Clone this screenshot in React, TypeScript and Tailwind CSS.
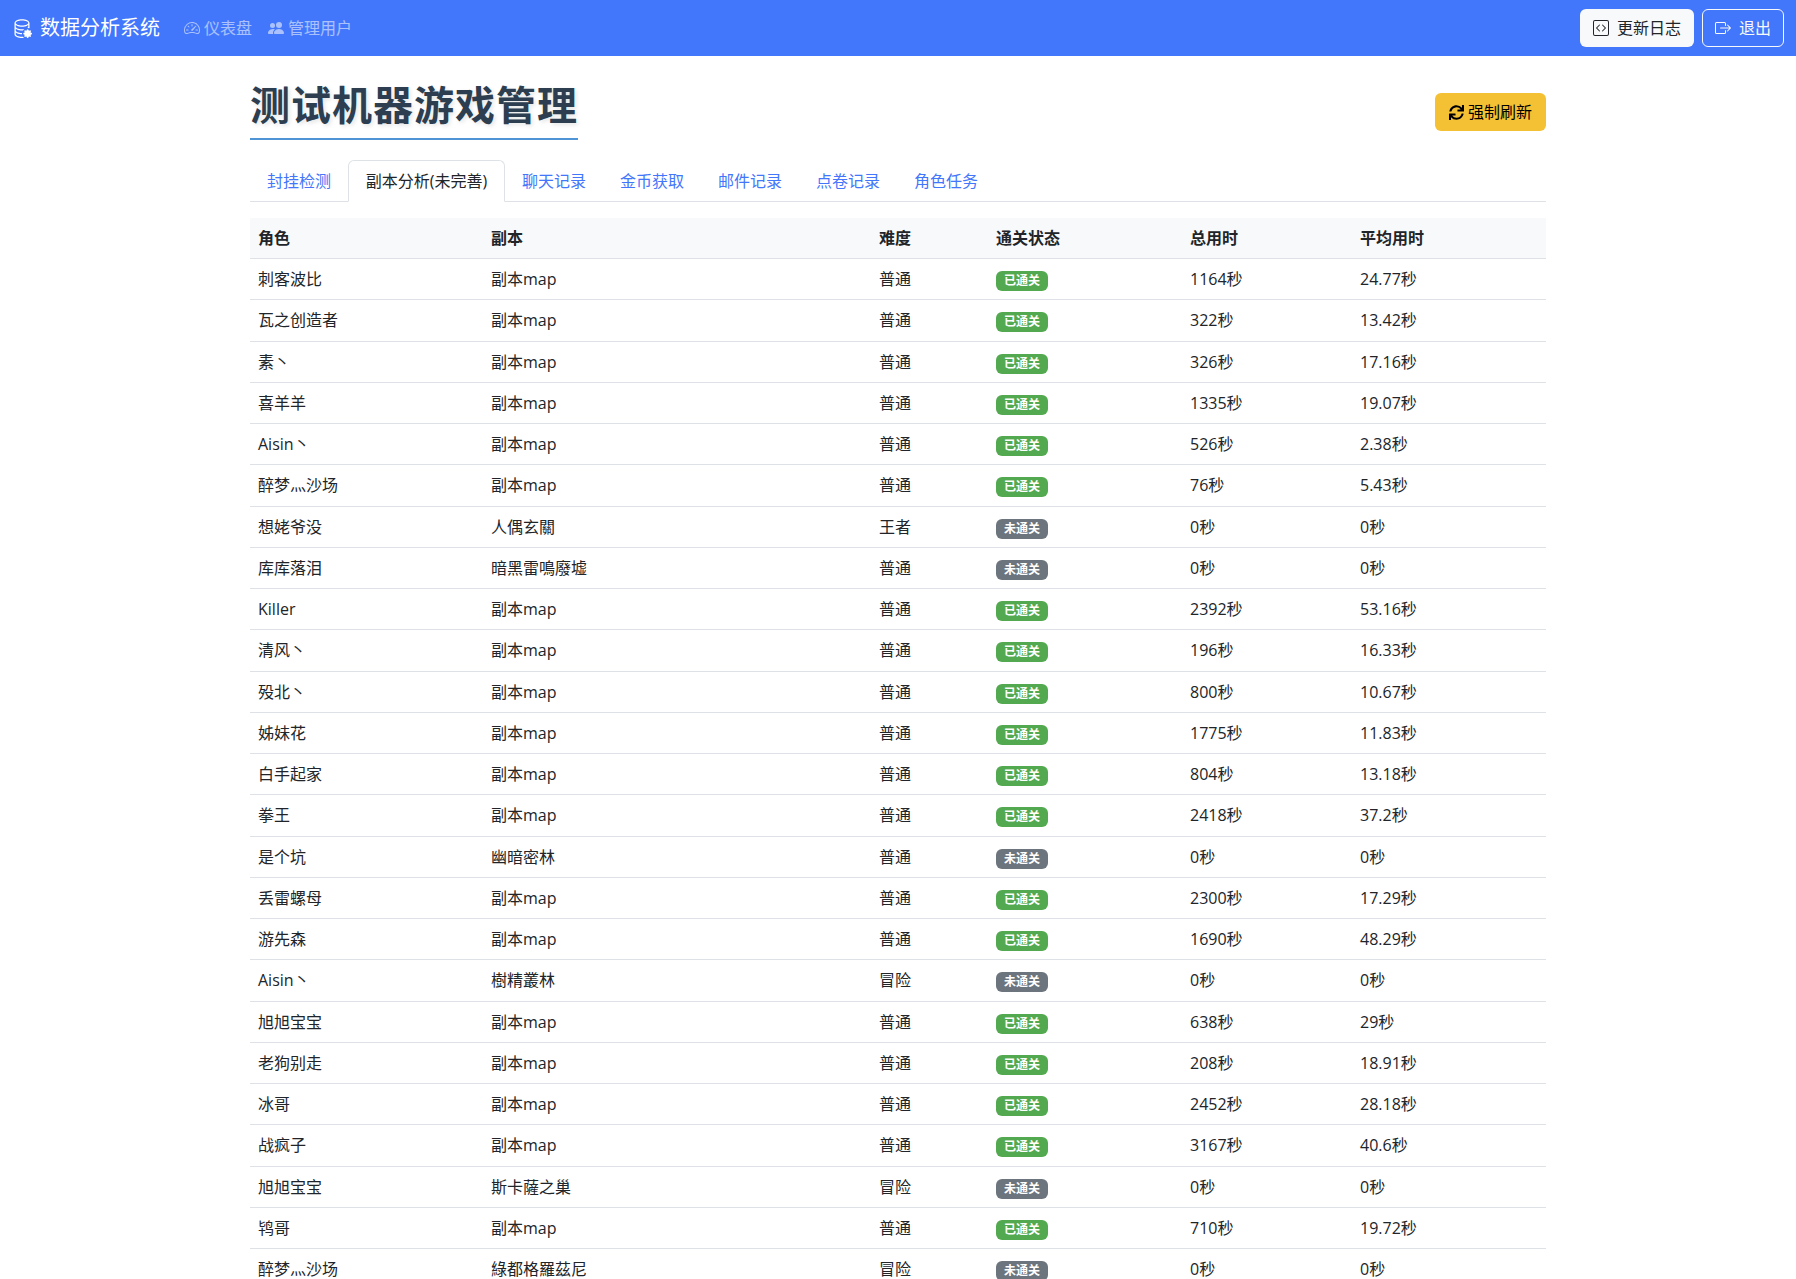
import { BsDatabaseGear, BsSpeedometer2, BsPeopleFill, BsCodeSquare, BsBoxArrowRight } from 'react-icons/bs';
import { FaSync } from 'react-icons/fa';

const FONT = "font-['Open_Sans','Noto_Sans_CJK_SC',sans-serif]";

const tabs = ['封挂检测', '副本分析(未完善)', '聊天记录', '金币获取', '邮件记录', '点卷记录', '角色任务'];

// role, dungeon, difficulty, cleared, total, average
const rows: [string, string, string, boolean, string, string][] = [
  ['刺客波比', '副本map', '普通', true, '1164秒', '24.77秒'],
  ['瓦之创造者', '副本map', '普通', true, '322秒', '13.42秒'],
  ['素丶', '副本map', '普通', true, '326秒', '17.16秒'],
  ['喜羊羊', '副本map', '普通', true, '1335秒', '19.07秒'],
  ['Aisin丶', '副本map', '普通', true, '526秒', '2.38秒'],
  ['醉梦灬沙场', '副本map', '普通', true, '76秒', '5.43秒'],
  ['想姥爷没', '人偶玄關', '王者', false, '0秒', '0秒'],
  ['库库落泪', '暗黑雷鳴廢墟', '普通', false, '0秒', '0秒'],
  ['Killer', '副本map', '普通', true, '2392秒', '53.16秒'],
  ['清风丶', '副本map', '普通', true, '196秒', '16.33秒'],
  ['殁北丶', '副本map', '普通', true, '800秒', '10.67秒'],
  ['姊妹花', '副本map', '普通', true, '1775秒', '11.83秒'],
  ['白手起家', '副本map', '普通', true, '804秒', '13.18秒'],
  ['拳王', '副本map', '普通', true, '2418秒', '37.2秒'],
  ['是个坑', '幽暗密林', '普通', false, '0秒', '0秒'],
  ['丢雷螺母', '副本map', '普通', true, '2300秒', '17.29秒'],
  ['游先森', '副本map', '普通', true, '1690秒', '48.29秒'],
  ['Aisin丶', '樹精叢林', '冒险', false, '0秒', '0秒'],
  ['旭旭宝宝', '副本map', '普通', true, '638秒', '29秒'],
  ['老狗别走', '副本map', '普通', true, '208秒', '18.91秒'],
  ['冰哥', '副本map', '普通', true, '2452秒', '28.18秒'],
  ['战疯子', '副本map', '普通', true, '3167秒', '40.6秒'],
  ['旭旭宝宝', '斯卡薩之巢', '冒险', false, '0秒', '0秒'],
  ['鸨哥', '副本map', '普通', true, '710秒', '19.72秒'],
  ['醉梦灬沙场', '綠都格羅茲尼', '冒险', false, '0秒', '0秒'],
];

export default function App() {
  return (
    <div className={`h-[1279px] overflow-hidden bg-white text-[16px] leading-6 text-[#212529] ${FONT}`}>
      {/* Navbar */}
      <nav className="h-14 bg-[#4276fb] flex items-center justify-between pl-3 pr-3">
        <div className="flex items-center">
          <a className="flex items-center text-white text-[20px] leading-[30px] mr-4">
            <BsDatabaseGear className="w-5 h-5 mr-2" />
            数据分析系统
          </a>
          <a className="flex items-center text-white/55 px-2">
            <BsSpeedometer2 className="w-4 h-4 mr-1" />
            仪表盘
          </a>
          <a className="flex items-center text-white/55 px-2">
            <BsPeopleFill className="w-4 h-4 mr-1" />
            管理用户
          </a>
        </div>
        <div className="flex items-center gap-2">
          <button className="h-[38px] w-[114px] flex items-center justify-center bg-[#f8f9fa] text-[#212529] rounded-md">
            <BsCodeSquare className="w-4 h-4 mr-2" />
            更新日志
          </button>
          <button className="h-[38px] w-[82px] flex items-center justify-center border border-[#f8f9fa] text-[#f8f9fa] rounded-md">
            <BsBoxArrowRight className="w-4 h-4 mr-2" />
            退出
          </button>
        </div>
      </nav>

      <main className="w-[1296px] ml-[250px]">
        {/* Title row */}
        <div className="flex items-start justify-between pt-[25px] h-[104px]">
          <h1 className="text-[40px] leading-[48px] font-bold tracking-[1px] text-[#2c3e50] pb-[9px] border-b-2 border-[#4f94d4] [text-shadow:2px_2px_4px_rgba(0,0,0,0.1)]">
            测试机器游戏管理
          </h1>
          <button className="mt-[12px] h-[38px] w-[111px] flex items-center justify-center bg-[#f4c134] text-black rounded-md">
            <FaSync className="w-[15px] h-[15px] mr-1" />
            强制刷新
          </button>
        </div>

        {/* Tabs */}
        <ul className="flex border-b border-[#dee2e6] h-[42px] mb-4">
          {tabs.map((t) => (
            <li key={t} className="-mb-px">
              {t === '副本分析(未完善)' ? (
                <a className="block w-[157px] text-center py-2 h-[42px] border border-[#dee2e6] border-b-white rounded-t-md bg-white text-[#212529]">{t}</a>
              ) : (
                <a className="block px-4 py-2 h-[42px] border border-transparent text-[#4276fb]">{t}</a>
              )}
            </li>
          ))}
        </ul>

        {/* Table */}
        <table className="w-full table-fixed border-collapse">
          <thead>
            <tr className="bg-[#f8f9fa] text-left border-b border-[#dee2e6]">
              <th className="w-[233px] px-2 py-2 h-[40.5px] font-bold">角色</th>
              <th className="w-[388px] px-2 py-2 font-bold">副本</th>
              <th className="w-[117px] px-2 py-2 font-bold">难度</th>
              <th className="w-[194px] px-2 py-2 font-bold">通关状态</th>
              <th className="w-[170px] px-2 py-2 font-bold">总用时</th>
              <th className="w-[194px] px-2 py-2 font-bold">平均用时</th>
            </tr>
          </thead>
          <tbody>
            {rows.map((r, i) => (
              <tr key={i} className="border-b border-[#dee2e6]">
                <td className="px-2 py-2 h-[41.25px]">{r[0]}</td>
                <td className="px-2 py-2">{r[1]}</td>
                <td className="px-2 py-2">{r[2]}</td>
                <td className="px-2 py-2">
                  {r[3] ? (
                    <span className="inline-block px-[8px] py-[4px] text-[12px] leading-[12px] font-bold text-white rounded-md bg-[#53a94f]">已通关</span>
                  ) : (
                    <span className="inline-block px-[8px] py-[4px] text-[12px] leading-[12px] font-bold text-white rounded-md bg-[#6c757d]">未通关</span>
                  )}
                </td>
                <td className="px-2 py-2">{r[4]}</td>
                <td className="px-2 py-2">{r[5]}</td>
              </tr>
            ))}
          </tbody>
        </table>
      </main>
    </div>
  );
}
